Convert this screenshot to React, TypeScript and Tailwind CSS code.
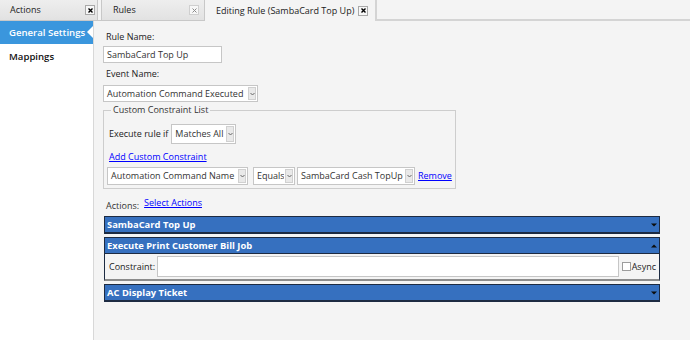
import { type ReactNode } from 'react'

// ---------------------------------------------------------------------------
// Small widgets
// ---------------------------------------------------------------------------

function CloseBox({ dim }: { dim?: boolean }) {
  return (
    <span
      className={
        'flex h-[10px] w-[10px] items-center justify-center border bg-[#f7f7f7] ' +
        (dim ? 'border-[#cfcfcf] text-[#8a8a8a]' : 'border-[#a9a9a9] text-black')
      }
    >
      <svg width="5" height="5" viewBox="0 0 5 5">
        <path d="M0.5 0.5 L4.5 4.5 M4.5 0.5 L0.5 4.5" stroke="currentColor" strokeWidth={dim ? 1 : 1.4} />
      </svg>
    </span>
  )
}

function Chevron() {
  return (
    <svg width="5" height="4" viewBox="0 0 5 4" className="text-[#666]">
      <path d="M0.5 1 L2.5 3 L4.5 1" fill="none" stroke="currentColor" strokeWidth="1" />
    </svg>
  )
}

function Select({ value, className }: { value: string; className: string }) {
  return (
    <div className={'flex items-stretch border border-[#c6c6c6] bg-white ' + className}>
      <span className="flex flex-1 items-center overflow-hidden whitespace-nowrap pl-[3px] text-[#333]">
        {value}
      </span>
      <span className="m-[1px] flex w-[8px] items-center justify-center border border-[#d0d0d0] bg-[#e9e9e9]">
        <Chevron />
      </span>
    </div>
  )
}

function LinkText({ children }: { children: ReactNode }) {
  return <span className="whitespace-nowrap text-[#0000ff] underline">{children}</span>
}

function Triangle({ up }: { up?: boolean }) {
  return (
    <svg width="6" height="4" viewBox="0 0 6 4">
      <path d={up ? 'M0 3.5 L3 0.5 L6 3.5 Z' : 'M0 0.5 L3 3.5 L6 0.5 Z'} fill="#0d0d0d" />
    </svg>
  )
}

function ActionBar({ title, open, children }: { title: string; open?: boolean; children?: ReactNode }) {
  return (
    <div className={'border border-[#1d2b42] ' + (children ? 'border-b-2 border-b-[#8c8c8c] bg-[#f4f4f4]' : '')}>
      <div className="flex h-[16px] items-center justify-between border-b border-[#1d2b42] bg-[#3670bf] pl-[2px] pr-[2px]">
        <span className="text-[9.4px] font-bold text-white">{title}</span>
        <Triangle up={open} />
      </div>
      {children}
    </div>
  )
}

// ---------------------------------------------------------------------------
// App
// ---------------------------------------------------------------------------

export default function App() {
  return (
    <div
      className="flex h-[340px] w-[690px] flex-col overflow-hidden bg-[#f4f4f4] text-[9px] leading-[12px] text-[#222]"
      style={{ fontFamily: '"Open Sans", sans-serif' }}
    >
      {/* tab strip */}
      <div className="flex h-[21px] shrink-0">
        <div className="flex w-[98px] items-center justify-between border-b border-r border-[#c8c8c8] bg-gradient-to-b from-[#eeeeee] to-[#e2e2e2] pl-[10px] pr-[2px]">
          <span>Actions</span>
          <CloseBox />
        </div>
        <div className="w-[3px] border-b border-[#c8c8c8] bg-[#f4f4f4]" />
        <div className="flex w-[104px] items-center justify-between border-b border-l border-r border-[#c8c8c8] bg-gradient-to-b from-[#eeeeee] to-[#e2e2e2] pl-[11px] pr-[5px]">
          <span>Rules</span>
          <CloseBox dim />
        </div>
        <div className="flex w-[170px] items-center justify-between bg-[#f4f4f4] pl-[11px] pr-[7px]">
          <span className="whitespace-nowrap">Editing Rule (SambaCard Top Up)</span>
          <CloseBox />
        </div>
        <div className="flex-1 border-b-2 border-l-2 border-[#d4d4d4] border-double" />
      </div>

      <div className="flex flex-1">
        {/* sidebar */}
        <div className="flex w-[94px] shrink-0 flex-col border-r border-[#d8d8d8] bg-white text-[9.6px]">
          <div className="relative flex h-[23px] items-center bg-[#3a96dd] pl-[9px] font-semibold text-white">
            General Settings
            <span className="absolute right-0 top-[5px] h-0 w-0 border-y-[6px] border-r-[6px] border-y-transparent border-r-white" />
          </div>
          <div className="flex h-[25px] items-center pl-[9px] font-semibold text-[#111]">Mappings</div>
        </div>

        {/* content */}
        <div className="flex flex-1 flex-col pl-[9px] pr-[30px] pt-[10px]">
          <div className="pl-[3px]">Rule Name:</div>
          <div className="mt-[3px] flex h-[17px] w-[119px] items-center border border-[#c6c6c6] bg-white pl-[3px] text-[#333]">
            SambaCard Top Up
          </div>
          <div className="mt-[5px] pl-[3px]">Event Name:</div>
          <Select value="Automation Command Executed" className="mt-[5px] h-[17px] w-[155px]" />

          <fieldset className="mt-[2px] w-[351px] border border-[#cdcdcd] px-[3px] pb-[3px]">
            <legend className="ml-[4px] px-[2px] text-[#333]">Custom Constraint List</legend>
            <div className="mt-[8px] flex items-center gap-[3px] pl-[2px]">
              <span>Execute rule if</span>
              <Select value="Matches All" className="h-[20px] w-[65px]" />
            </div>
            <div className="mt-[7px] pl-[2px]">
              <LinkText>Add Custom Constraint</LinkText>
            </div>
            <div className="mt-[4px] flex items-center">
              <Select value="Automation Command Name" className="h-[18px] w-[141px]" />
              <Select value="Equals" className="ml-[5px] h-[18px] w-[42px]" />
              <Select value="SambaCard Cash TopUp" className="ml-[2px] h-[18px] w-[118px]" />
              <span className="ml-[3px]">
                <LinkText>Remove</LinkText>
              </span>
            </div>
          </fieldset>

          <div className="mt-[8px] flex items-end gap-[5px] pl-[3px]">
            <span className="text-[#333]">Actions:</span>
            <span className="mb-[3px]">
              <LinkText>Select Actions</LinkText>
            </span>
          </div>

          <div className="mt-[4px] flex flex-col gap-[3px] pl-[1px]">
            <ActionBar title="SambaCard Top Up" />
            <ActionBar title="Execute Print Customer Bill Job" open>
              <div className="flex h-[25px] items-center pl-[4px] pr-[3px]">
                <span>Constraint:</span>
                <div className="ml-[2px] h-[21px] flex-1 border border-[#c6c6c6] bg-white" />
                <span className="ml-[3px] h-[9px] w-[9px] border border-[#9c9c9c] bg-white" />
                <span className="ml-[1px]">Async</span>
              </div>
            </ActionBar>
            <ActionBar title="AC Display Ticket" />
          </div>
        </div>
      </div>
    </div>
  )
}
